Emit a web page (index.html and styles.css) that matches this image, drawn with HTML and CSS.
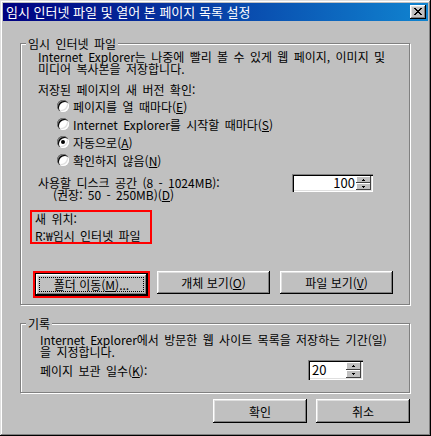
FILE: index.html
```html
<!DOCTYPE html>
<html lang="ko">
<head>
<meta charset="utf-8">
<title>임시 인터넷 파일 및 열어 본 페이지 목록 설정</title>
<link rel="stylesheet" href="styles.css">
</head>
<body>
<div class="window">
  <div class="titlebar">
    <span class="title">임시 인터넷 파일 및 열어 본 페이지 목록 설정</span>
    <span class="close"><svg width="8" height="7" viewBox="0 0 8 7" shape-rendering="crispEdges"><path fill="#000" d="M0 0h2v1H0z M6 0h2v1H6z M1 1h2v1H1z M5 1h2v1H5z M2 2h4v1H2z M3 3h2v1H3z M2 4h4v1H2z M1 5h2v1H1z M5 5h2v1H5z M0 6h2v1H0z M6 6h2v1H6z"/></svg></span>
  </div>

  <div class="group g1">
    <div class="gtitle">임시 인터넷 파일</div>
    <p class="desc">Internet Explorer는 나중에 빨리 볼 수 있게 웹 페이지, 이미지 및<br>미디어 복사본을 저장합니다.</p>
    <p class="check">저장된 페이지의 새 버전 확인:</p>
    <div class="radios">
      <div class="rrow"><span class="radio"></span><span>페이지를 열 때마다(<u>E</u>)</span></div>
      <div class="rrow"><span class="radio"></span><span>Internet Explorer를 시작할 때마다(<u>S</u>)</span></div>
      <div class="rrow"><span class="radio on"></span><span>자동으로(<u>A</u>)</span></div>
      <div class="rrow"><span class="radio"></span><span>확인하지 않음(<u>N</u>)</span></div>
    </div>
    <div class="disk">
      <div class="disktext">
        <div>사용할 디스크 공간 (8 - 1024MB):</div>
        <div class="indent">(권장: 50 - 250MB)(<u>D</u>)</div>
      </div>
      <div class="spin s1">
        <span class="val">100</span>
        <span class="sbtns">
          <span class="sb"><svg width="3" height="2" viewBox="0 0 3 2" shape-rendering="crispEdges"><path fill="#000" d="M1 0h1v1H1z M0 1h3v1H0z"/></svg></span>
          <span class="sb"><svg width="3" height="2" viewBox="0 0 3 2" shape-rendering="crispEdges"><path fill="#000" d="M0 0h3v1H0z M1 1h1v1H1z"/></svg></span>
        </span>
      </div>
    </div>
    <div class="loc">
      <div>새 위치:</div>
      <div class="path">R:₩임시 인터넷 파일</div>
    </div>
    <div class="btnrow">
      <div class="hl"><button class="btn default"><span class="focus">폴더 이동(<u>M</u>)...</span></button></div>
      <button class="btn">개체 보기(<u>O</u>)</button>
      <button class="btn last">파일 보기(<u>V</u>)</button>
    </div>
  </div>

  <div class="group g2">
    <div class="gtitle">기록</div>
    <p class="desc2">Internet Explorer에서 방문한 웹 사이트 목록을 저장하는 기간(일)<br>을 지정합니다.</p>
    <div class="days">
      <span>페이지 보관 일수(<u>K</u>):</span>
      <div class="spin s2">
        <span class="val">20</span>
        <span class="sbtns">
          <span class="sb"><svg width="3" height="2" viewBox="0 0 3 2" shape-rendering="crispEdges"><path fill="#000" d="M1 0h1v1H1z M0 1h3v1H0z"/></svg></span>
          <span class="sb"><svg width="3" height="2" viewBox="0 0 3 2" shape-rendering="crispEdges"><path fill="#000" d="M0 0h3v1H0z M1 1h1v1H1z"/></svg></span>
        </span>
      </div>
    </div>
  </div>

  <div class="footer">
    <button class="btn ok">확인</button>
    <button class="btn ok">취소</button>
  </div>
</div>
</body>
</html>
```
FILE: styles.css
```css
* { box-sizing: border-box; }
html, body { margin: 0; padding: 0; background: #c0c0c0; }
p { margin: 0; }

.window {
  width: 431px;
  height: 436px;
  background: #c0c0c0;
  padding: 3px;
  box-shadow: inset -1px -1px 0 #000, inset 1px 1px 0 #dfdfdf, inset -2px -2px 0 #808080, inset 2px 2px 0 #fff;
  font-family: "Noto Sans CJK KR", sans-serif;
  font-size: 12px;
  word-spacing: 2px;
  color: #000;
}

.titlebar {
  height: 18px;
  background: linear-gradient(to right, #000080, #1084d0);
  display: flex;
  align-items: center;
  justify-content: space-between;
  padding: 0 2px 0 3px;
}
.title { color: #fff; font-size: 13px; line-height: 18px; white-space: nowrap; word-spacing: 0; }
.close {
  width: 16px;
  height: 14px;
  background: #c0c0c0;
  box-shadow: inset -1px -1px 0 #000, inset 1px 1px 0 #fff, inset -2px -2px 0 #808080, inset 2px 2px 0 #dfdfdf;
  display: flex;
  align-items: center;
  justify-content: center;
  padding-bottom: 1px;
}

.group {
  width: 390px;
  margin-left: 17px;
  border: 1px solid #808080;
  box-shadow: inset 1px 1px 0 #fff, 1px 1px 0 #fff;
}
.gtitle {
  width: fit-content;
  background: #c0c0c0;
  padding: 0 2px;
  margin-top: -7px;
  line-height: 13px;
  white-space: nowrap;
}

.g1 { margin-top: 22px; padding: 0 0 6px 17px; }
.g1 .gtitle { margin-left: -12px; }
.desc { margin-top: 1px; line-height: 12px; white-space: nowrap; }
.check { margin-top: 9px; line-height: 12px; }
.radios { margin-top: 1px; padding-left: 19px; }
.rrow { height: 18px; display: flex; align-items: center; gap: 4px; line-height: 13px; white-space: nowrap; }
.radio {
  width: 12px;
  height: 12px;
  flex: none;
  border-radius: 50%;
  background: #fff;
  box-shadow: inset 1px 1px 0 #808080, inset 2px 2px 0 #000, inset -1px -1px 0 #fff, inset -2px -2px 0 #dfdfdf;
  display: flex;
  align-items: center;
  justify-content: center;
}
.radio.on::after {
  content: "";
  width: 4px;
  height: 4px;
  border-radius: 50%;
  background: #000;
}

.disk { margin-top: 5px; display: flex; justify-content: space-between; align-items: flex-start; padding-right: 36px; }
.disktext { margin-top: 3px; line-height: 12px; white-space: nowrap; }
.indent { padding-left: 15px; }

.spin {
  display: flex;
  background: #fff;
  padding: 2px;
  box-shadow: inset 1px 1px 0 #808080, inset 2px 2px 0 #000, inset -1px -1px 0 #fff, inset -2px -2px 0 #dfdfdf;
}
.val { flex: 1; font-size: 13px; line-height: 14px; }
.s1 { width: 81px; height: 18px; }
.s1 .val { text-align: right; padding-right: 1px; }
.s2 { width: 55px; height: 20px; }
.s2 .val { text-align: left; padding-left: 2px; line-height: 16px; }
.sbtns { width: 15px; display: flex; flex-direction: column; }
.sb {
  flex: 1;
  background: #c0c0c0;
  box-shadow: inset -1px -1px 0 #404040, inset 1px 1px 0 #fff;
  display: flex;
  align-items: center;
  justify-content: center;
}

.loc { margin: 9px 0 0 -8px; width: 122px; border: 2px solid #f00; padding-left: 3px; }
.loc div { line-height: 13px; white-space: nowrap; }
.loc .path { margin-top: 4px; }

.btnrow { margin: 27px 0 0 -5px; display: flex; gap: 7px; }
.hl { border: 2px solid #f00; }
.btn {
  width: 113px;
  height: 23px;
  padding: 0;
  border: 0;
  font: inherit;
  color: #000;
  line-height: 13px;
  background: #c0c0c0;
  box-shadow: inset -1px -1px 0 #000, inset 1px 1px 0 #fff, inset -2px -2px 0 #808080, inset 2px 2px 0 #dfdfdf;
  display: flex;
  align-items: center;
  justify-content: center;
  white-space: nowrap;
}
.btn.last { margin-left: 3px; }
.btn.default { border: 1px solid #000; padding: 2px; }
.focus {
  flex: 1;
  align-self: stretch;
  margin: 1px;
  border: 1px dotted #000;
  display: flex;
  align-items: center;
  justify-content: center;
}

.g2 { margin-top: 18px; padding: 0 0 12px 19px; }
.g2 .gtitle { margin-left: -14px; }
.desc2 { margin-top: 4px; line-height: 12px; white-space: nowrap; }
.days { margin-top: 2px; display: flex; justify-content: space-between; align-items: center; padding-right: 46px; line-height: 13px; }

.footer { margin-top: 6px; display: flex; justify-content: flex-end; gap: 9px; padding-right: 18px; }
.btn.ok { width: 94px; height: 24px; }
```
